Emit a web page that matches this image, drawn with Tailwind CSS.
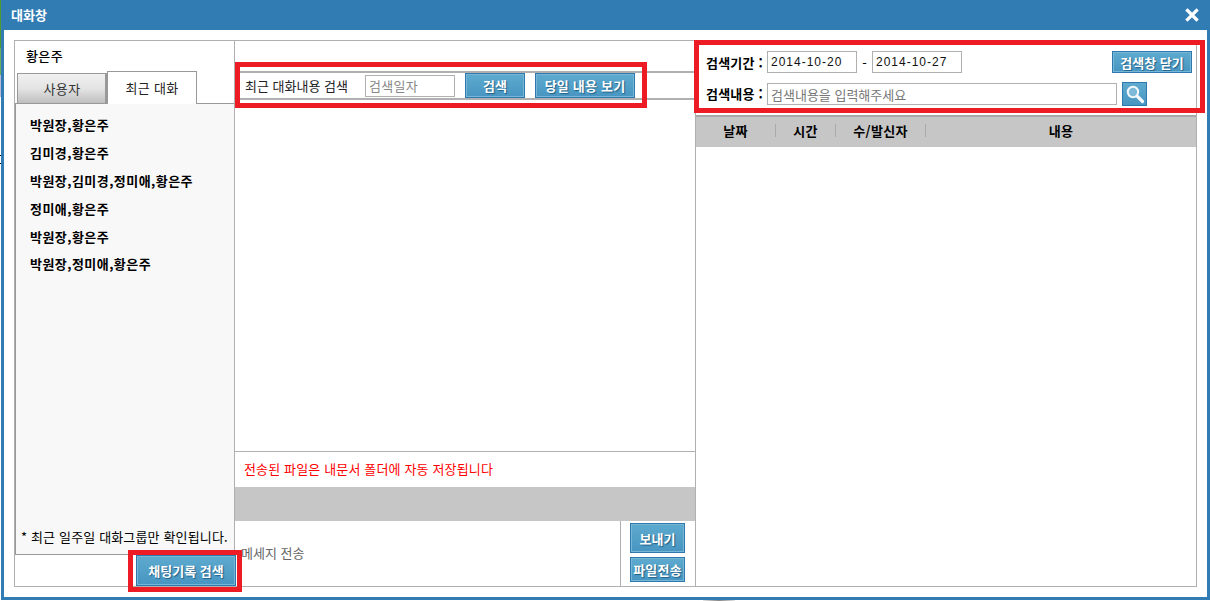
<!DOCTYPE html>
<html lang="ko">
<head>
  <meta charset="UTF-8">
  <title>대화창</title>
  <script src="https://cdn.jsdelivr.net/npm/@tailwindcss/browser@4"></script>
</head>
<body class="bg-white overflow-hidden font-['Noto_Sans_CJK_KR','Liberation_Sans',sans-serif] text-[13px] leading-none text-black">
  <div class="relative w-[1210px] h-[601px]">
    <!-- Bits of the desktop showing behind the window -->
    <div class="absolute left-0 top-0 w-[1px] h-[48px] bg-[#4f9a2c]"></div>
    <div class="absolute left-0 top-[48px] w-[1px] h-[27px] bg-[#6fae5a]"></div>
    <div class="absolute left-0 top-[75px] w-[1px] h-[22px] bg-[#b9b9dc]"></div>
    <div class="absolute left-0 top-[155px] w-[1px] h-[1px] bg-black"></div>
    <div class="absolute left-0 top-[163px] w-[1px] h-[1px] bg-black"></div>
    <div class="absolute left-[703px] top-[600px] w-[32px] h-[1px] bg-gradient-to-r from-[#e6e6e6] via-[#888] to-[#e6e6e6]"></div>

    <!-- Window -->
    <div class="ml-[1px] w-[1209px] h-[600px] border-x-[3px] border-b-[3px] border-[#327cb4] bg-white flex flex-col">
      <div class="h-[30px] -mx-[3px] bg-[#327cb4] flex items-center justify-between pl-[10px] pr-[11px] pb-[1px] shrink-0">
        <span class="text-white font-bold text-[13px]">대화창</span>
        <svg width="14" height="14" viewBox="0 0 14 14"><path d="M2.5 2.5 L11.5 11.5 M11.5 2.5 L2.5 11.5" stroke="#fff" stroke-width="3.2" stroke-linecap="square"/></svg>
      </div>

      <div class="mt-[10px] ml-[10px] w-[1183px] h-[547px] border border-[#b0b0b0] flex">
        <!-- Left column -->
        <div class="w-[220px] shrink-0 flex flex-col">
          <div class="h-[30px] pl-[11px] pt-[8px] font-medium tracking-[0.4px]">황은주</div>
          <div class="h-[32px] flex items-end pl-[2px] shrink-0 tracking-[0.3px]">
            <div class="w-[90px] h-[30px] pl-[1px] flex items-center justify-center border border-b-0 border-r-2 border-[#999] bg-gradient-to-b from-[#f0f0f0] via-[#e4e4e4] to-[#bfbfbf] text-[#333]">사용자</div>
            <div class="w-[90px] h-[33px] -mb-[1px] relative z-10 flex items-center justify-center border border-b-0 border-[#999] bg-white text-[#222]">최근 대화</div>
          </div>
          <div class="h-[453px] border border-[#999] bg-[#f8f8f8] flex flex-col justify-between pl-[14px] pt-[7px] pb-[11px] font-bold tracking-[0.45px]">
            <ul class="flex flex-col">
              <li class="h-[27.8px] flex items-center">박원장,황은주</li>
              <li class="h-[27.8px] flex items-center">김미경,황은주</li>
              <li class="h-[27.8px] flex items-center">박원장,김미경,정미애,황은주</li>
              <li class="h-[27.8px] flex items-center">정미애,황은주</li>
              <li class="h-[27.8px] flex items-center">박원장,황은주</li>
              <li class="h-[27.8px] flex items-center">박원장,정미애,황은주</li>
            </ul>
            <p class="-ml-[9px] font-normal text-[13px] tracking-[0.15px] whitespace-nowrap">* 최근 일주일 대화그룹만 확인됩니다.</p>
          </div>
          <div class="flex justify-end -mr-[1px] relative z-10">
            <button class="w-[100px] h-[31px] border border-[#2f78ad] outline outline-1 -outline-offset-2 outline-[#78b6d6] bg-gradient-to-b from-[#5eaacf] to-[#4795c1] text-white font-bold text-[13px] [text-shadow:1px_1px_1px_#1f5f85]">채팅기록 검색</button>
          </div>
        </div>

        <!-- Center column -->
        <div class="w-[462px] shrink-0 border-r border-l border-[#b0b0b0] -ml-[1px] flex flex-col">
          <div class="mt-[30px] h-[29px] border-y-2 border-[#b0b0b0] flex items-center pl-[10px] shrink-0">
            <span class="w-[120px] text-[13px] text-[#222] whitespace-nowrap">최근 대화내용 검색</span>
            <input placeholder="검색일자" class="w-[90px] h-[22px] border border-[#b0b0b0] px-[3px] text-[13px] tracking-[0.3px] placeholder:text-[#888]">
            <button class="ml-[10px] w-[60px] h-[25px] border border-[#2f78ad] outline outline-1 -outline-offset-2 outline-[#78b6d6] bg-gradient-to-b from-[#5eaacf] to-[#4795c1] text-white font-bold [text-shadow:1px_1px_1px_#1f5f85]">검색</button>
            <button class="ml-[10px] w-[100px] h-[25px] border border-[#2f78ad] outline outline-1 -outline-offset-2 outline-[#78b6d6] bg-gradient-to-b from-[#5eaacf] to-[#4795c1] text-white font-bold tracking-[0.2px] [text-shadow:1px_1px_1px_#1f5f85]">당일 내용 보기</button>
          </div>
          <div class="flex-1"></div>
          <div class="h-[36px] border-t border-[#b0b0b0] flex items-center pl-[9px] pb-[2px] text-[#ff0000] tracking-[0.15px] shrink-0">전송된 파일은 내문서 폴더에 자동 저장됩니다</div>
          <div class="h-[34px] bg-[#c6c6c6] shrink-0"></div>
          <div class="h-[65px] flex shrink-0">
            <div class="w-[385px] flex items-center pl-[6px] pb-[2px] text-[#666] text-[13px]">메세지 전송</div>
            <div class="flex-1 border-l border-[#b0b0b0] flex flex-col pl-[9px] pt-[2px] gap-[4px]">
              <button class="w-[55px] h-[30px] border border-[#2f78ad] outline outline-1 -outline-offset-2 outline-[#78b6d6] bg-gradient-to-b from-[#5eaacf] to-[#4795c1] text-white font-bold [text-shadow:1px_1px_1px_#1f5f85]">보내기</button>
              <button class="w-[55px] h-[25px] border border-[#2f78ad] outline outline-1 -outline-offset-2 outline-[#78b6d6] bg-gradient-to-b from-[#5eaacf] to-[#4795c1] text-white font-bold text-[13px] tracking-[0.2px] whitespace-nowrap [text-shadow:1px_1px_1px_#1f5f85]">파일전송</button>
            </div>
          </div>
        </div>

        <!-- Right column -->
        <div class="flex-1 flex flex-col">
          <div class="h-[74px] pl-[10px] pr-[4px] pt-[10px] flex flex-col gap-[10px] shrink-0">
            <div class="flex items-center h-[22px]">
              <span class="w-[61px] font-bold tracking-[0.2px] whitespace-nowrap">검색기간 :</span>
              <input value="2014-10-20" class="w-[90px] h-[22px] border border-[#b0b0b0] px-[3px] font-['Liberation_Sans',sans-serif] text-[12px] tracking-[1px] text-[#111]">
              <span class="w-[15px] text-center">-</span>
              <input value="2014-10-27" class="w-[90px] h-[22px] border border-[#b0b0b0] px-[3px] font-['Liberation_Sans',sans-serif] text-[12px] tracking-[1px] text-[#111]">
              <button class="ml-auto w-[80px] h-[22px] border border-[#2f78ad] outline outline-1 -outline-offset-2 outline-[#78b6d6] bg-gradient-to-b from-[#5eaacf] to-[#4795c1] text-white font-bold [text-shadow:1px_1px_1px_#1f5f85] whitespace-nowrap">검색창 닫기</button>
            </div>
            <div class="flex items-center h-[22px]">
              <span class="w-[61px] pb-[2px] font-bold tracking-[0.2px] whitespace-nowrap">검색내용 :</span>
              <input placeholder="검색내용을 입력해주세요" class="w-[350px] h-[22px] border border-[#b0b0b0] px-[3px] text-[13px] placeholder:text-[#777]">
              <button class="ml-[5px] w-[25px] h-[24px] border border-[#2f78ad] bg-gradient-to-b from-[#5eaacf] to-[#4795c1] flex items-center justify-center">
                <svg width="20" height="20" viewBox="0 0 20 20" fill="none"><circle cx="8" cy="8" r="5.2" stroke="#f4f8fb" stroke-width="2" fill="#7fb9d8"/><path d="M12.5 12.5 L17.5 17.5" stroke="#f4f8fb" stroke-width="3.2" stroke-linecap="round"/></svg>
              </button>
            </div>
          </div>
          <div class="h-[32px] border-t-2 border-[#a8a8a8] bg-[#c6c6c6] flex items-center pb-[3px] font-bold text-[13px] tracking-[0.3px] shrink-0">
            <div class="w-[80px] text-center border-r border-[#aaa]">날짜</div>
            <div class="w-[60px] text-center border-r border-[#aaa]">시간</div>
            <div class="w-[90px] text-center border-r border-[#aaa] whitespace-nowrap">수/발신자</div>
            <div class="flex-1 text-center">내용</div>
          </div>
        </div>
      </div>
    </div>

    <!-- Red annotation boxes drawn over the screenshot -->
    <div class="absolute left-[235px] top-[62px] w-[412px] h-[46px] border-[5px] border-[#ed1c24]"></div>
    <div class="absolute left-[694px] top-[40px] w-[511px] h-[73px] border-[5px] border-[#ed1c24]"></div>
    <div class="absolute left-[128px] top-[550px] w-[114px] h-[42px] border-[5px] border-[#ed1c24]"></div>
  </div>
</body>
</html>
